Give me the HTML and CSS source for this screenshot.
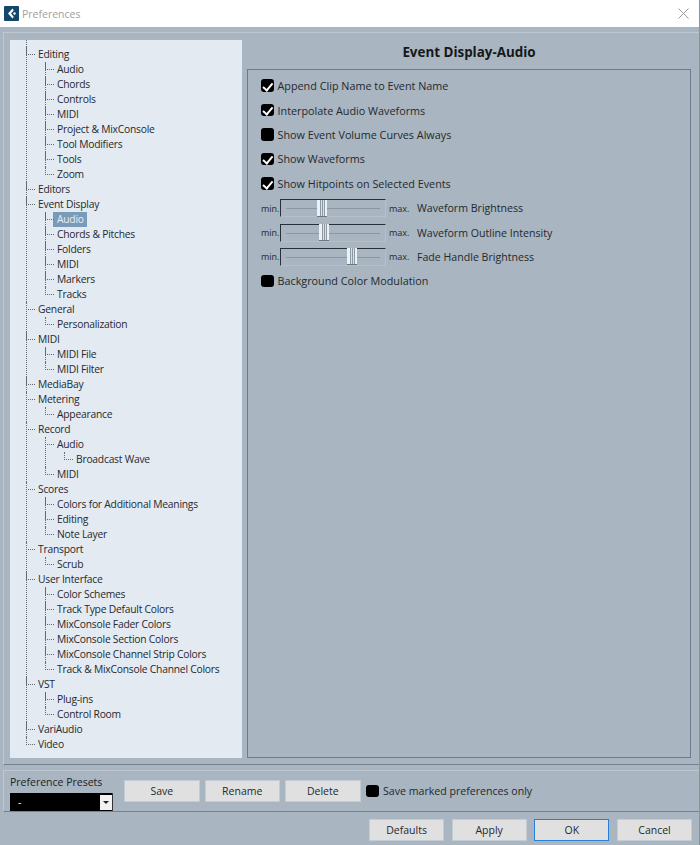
FILE: index.html
```html
<!DOCTYPE html>
<html lang="en">
<head>
<meta charset="utf-8">
<title>Preferences</title>
<link rel="stylesheet" href="styles.css">
</head>
<body>
<div class="window">
  <header class="titlebar">
    <svg class="app-icon" width="15" height="15" viewBox="0 0 15 15"><rect width="15" height="15" rx="1" fill="#12476b"/><path d="M8.5 2.5 L4 7.5 L8.5 12.5 L9.8 10.8 L7 7.5 L9.8 4.2 Z" fill="#fff"/><circle cx="10.5" cy="7.5" r="1.2" fill="#fff"/></svg>
    <span class="title">Preferences</span>
    <svg class="close" width="11" height="11" viewBox="0 0 11 11"><path d="M0.5 0.5 L10.5 10.5 M10.5 0.5 L0.5 10.5" stroke="#9a9a9a" stroke-width="1" fill="none"/></svg>
  </header>

  <section class="frame main-frame">
    <nav class="tree">
      <ul class="root">
        <li><span class="node">Editing</span>
          <ul>
            <li><span class="node">Audio</span></li>
            <li><span class="node">Chords</span></li>
            <li><span class="node">Controls</span></li>
            <li><span class="node">MIDI</span></li>
            <li><span class="node">Project &amp; MixConsole</span></li>
            <li><span class="node">Tool Modifiers</span></li>
            <li><span class="node">Tools</span></li>
            <li><span class="node">Zoom</span></li>
          </ul>
        </li>
        <li><span class="node">Editors</span></li>
        <li><span class="node">Event Display</span>
          <ul>
            <li><span class="node selected">Audio</span></li>
            <li><span class="node">Chords &amp; Pitches</span></li>
            <li><span class="node">Folders</span></li>
            <li><span class="node">MIDI</span></li>
            <li><span class="node">Markers</span></li>
            <li><span class="node">Tracks</span></li>
          </ul>
        </li>
        <li><span class="node">General</span>
          <ul><li><span class="node">Personalization</span></li></ul>
        </li>
        <li><span class="node">MIDI</span>
          <ul>
            <li><span class="node">MIDI File</span></li>
            <li><span class="node">MIDI Filter</span></li>
          </ul>
        </li>
        <li><span class="node">MediaBay</span></li>
        <li><span class="node">Metering</span>
          <ul><li><span class="node">Appearance</span></li></ul>
        </li>
        <li><span class="node">Record</span>
          <ul>
            <li><span class="node">Audio</span>
              <ul><li><span class="node">Broadcast Wave</span></li></ul>
            </li>
            <li><span class="node">MIDI</span></li>
          </ul>
        </li>
        <li><span class="node">Scores</span>
          <ul>
            <li><span class="node">Colors for Additional Meanings</span></li>
            <li><span class="node">Editing</span></li>
            <li><span class="node">Note Layer</span></li>
          </ul>
        </li>
        <li><span class="node">Transport</span>
          <ul><li><span class="node">Scrub</span></li></ul>
        </li>
        <li><span class="node">User Interface</span>
          <ul>
            <li><span class="node">Color Schemes</span></li>
            <li><span class="node">Track Type Default Colors</span></li>
            <li><span class="node">MixConsole Fader Colors</span></li>
            <li><span class="node">MixConsole Section Colors</span></li>
            <li><span class="node">MixConsole Channel Strip Colors</span></li>
            <li><span class="node">Track &amp; MixConsole Channel Colors</span></li>
          </ul>
        </li>
        <li><span class="node">VST</span>
          <ul>
            <li><span class="node">Plug-ins</span></li>
            <li><span class="node">Control Room</span></li>
          </ul>
        </li>
        <li><span class="node">VariAudio</span></li>
        <li><span class="node">Video</span></li>
      </ul>
    </nav>

    <div class="content">
      <h1 class="heading">Event Display-Audio</h1>
      <div class="box">
        <div class="row"><span class="check on"></span><span>Append Clip Name to Event Name</span></div>
        <div class="row"><span class="check on"></span><span>Interpolate Audio Waveforms</span></div>
        <div class="row"><span class="check"></span><span>Show Event Volume Curves Always</span></div>
        <div class="row"><span class="check on"></span><span>Show Waveforms</span></div>
        <div class="row"><span class="check on"></span><span>Show Hitpoints on Selected Events</span></div>
        <div class="row slider-row"><span class="min">min.</span><span class="slider"><span class="thumb" style="margin-left:36px"></span></span><span class="max">max.</span><span>Waveform Brightness</span></div>
        <div class="row slider-row"><span class="min">min.</span><span class="slider"><span class="thumb" style="margin-left:38px"></span></span><span class="max">max.</span><span>Waveform Outline Intensity</span></div>
        <div class="row slider-row"><span class="min">min.</span><span class="slider"><span class="thumb" style="margin-left:66px"></span></span><span class="max">max.</span><span>Fade Handle Brightness</span></div>
        <div class="row"><span class="check"></span><span>Background Color Modulation</span></div>
      </div>
    </div>
  </section>

  <section class="frame preset-frame">
    <div class="preset">
      <label class="preset-label">Preference Presets</label>
      <div class="select"><span>-</span><span class="arrow"></span></div>
    </div>
    <div class="preset-actions">
      <button class="btn">Save</button>
      <button class="btn">Rename</button>
      <button class="btn">Delete</button>
      <span class="check marked"></span><span class="marked-label">Save marked preferences only</span>
    </div>
  </section>

  <footer class="footer">
    <button class="btn">Defaults</button>
    <button class="btn">Apply</button>
    <button class="btn primary">OK</button>
    <button class="btn">Cancel</button>
  </footer>
</div>
</body>
</html>
```

FILE: styles.css
```css
* { box-sizing: border-box; }
html, body { margin: 0; padding: 0; }
body {
  width: 700px;
  height: 845px;
  overflow: hidden;
  font-family: "Open Sans", "Noto Sans", sans-serif;
  font-size: 10.5px;
  color: #24292d;
}
.window {
  width: 700px;
  height: 845px;
  display: flex;
  flex-direction: column;
  background: #a9b5c0;
  border-right: 1px solid #8a949d;
}
.titlebar {
  height: 27px;
  flex: none;
  background: #fff;
  display: flex;
  align-items: center;
  padding: 0 10px 0 4px;
}
.title { margin-left: 3px; color: #a0a0a0; font-size: 10.5px; }
.close { margin-left: auto; }
.app-icon { flex: none; }

.frame {
  margin-left: 3px;
  border-top: 1px solid #bdc8d2;
  border-left: 1px solid #bdc8d2;
  border-bottom: 1px solid #76828d;
}
.main-frame {
  margin-top: 5px;
  height: 733px;
  flex: none;
  display: flex;
  gap: 5px;
  padding: 7px 0 6px 6px;
}

.tree {
  width: 232px;
  flex: none;
  background: #e4eaf2;
  padding-top: 7px;
  font-size: 10.3px;
  letter-spacing: -0.23px;
}
.tree ul { list-style: none; margin: 0; padding: 0; }
.root { margin-left: 16px !important; }
.tree ul ul { margin-left: 7px; }
.tree li {
  position: relative;
  border-left: 1px dotted #5f6a74;
  padding-left: 11px;
}
.tree li:last-child { border-left-color: transparent; }
.tree li::before {
  content: "";
  position: absolute;
  left: -1px;
  top: 0;
  width: 8px;
  height: 7px;
  border-left: 1px dotted #5f6a74;
  border-bottom: 1px dotted #5f6a74;
}
.root > li:first-child::before { top: -7px; height: 14px; }
.node {
  display: block;
  height: 15px;
  line-height: 15px;
  white-space: nowrap;
}
.selected {
  width: 34px;
  margin-left: -4px;
  padding-left: 4px;
  background: #7b99b9;
  color: #e9eff6;
}

.content { flex: none; width: 444px; display: flex; flex-direction: column; font-size: 10.8px; }
.heading {
  margin: 0;
  height: 29px;
  flex: none;
  text-align: center;
  font-size: 13.4px;
  font-weight: 700;
  line-height: 25px;
  color: #14181b;
}
.box {
  flex: 1;
  border: 1px solid #6f7b86;
  padding: 3.5px 0 0 13px;
}
.row {
  height: 24.4px;
  display: flex;
  align-items: center;
}
.slider-row { padding-top: 1px; font-size: 10.6px; }
.check {
  width: 12.5px;
  height: 12.5px;
  flex: none;
  margin-right: 4px;
  background: #000;
  border-radius: 3px;
  position: relative;
}
.check.on::after {
  content: "";
  position: absolute;
  left: 4px;
  top: 1.5px;
  width: 4px;
  height: 7.5px;
  border-right: 2px solid #fff;
  border-bottom: 2px solid #fff;
  transform: rotate(40deg);
}
.min { width: 19px; font-size: 9px; flex: none; }
.max { width: 31px; padding-left: 3px; font-size: 9px; flex: none; }
.slider {
  width: 106px;
  height: 18px;
  flex: none;
  border-top: 1px solid #27313a;
  border-left: 1px solid #27313a;
  border-right: 1px solid #b5c0ca;
  border-bottom: 1px solid #b5c0ca;
  display: flex;
  align-items: center;
  background: linear-gradient(#8a96a1, #8a96a1) 5px 8px / 94px 1px no-repeat;
}
.thumb {
  width: 10px;
  height: 17px;
  flex: none;
  background: linear-gradient(90deg, #eef1f3 0 3px, #8f99a3 3px 4px, #d9dfe3 4px 5px, #8f99a3 5px 6px, #d9dfe3 6px 7px, #8f99a3 7px 8px, #eef1f3 8px);
  border-bottom: 1px solid #6b7680;
}

.preset-frame {
  margin-top: 5px;
  height: 42px;
  flex: none;
  display: flex;
  border-top-color: #bdc8d2;
  padding-left: 6px;
}
.preset { width: 103px; flex: none; display: flex; flex-direction: column; padding-top: 3px; }
.preset-label { height: 19px; line-height: 16px; color: #1d2226; }
.select {
  height: 18px;
  background: #000;
  color: #fff;
  display: flex;
  align-items: center;
  justify-content: space-between;
  padding-left: 8px;
  border-right: 1px solid #333;
}
.arrow {
  width: 12px;
  height: 15px;
  background: #f2f2f2;
  position: relative;
}
.arrow::after {
  content: "";
  position: absolute;
  left: 3px;
  top: 6px;
  border-left: 3px solid transparent;
  border-right: 3px solid transparent;
  border-top: 3px solid #222;
}
.preset-actions {
  display: flex;
  align-items: center;
  margin-left: 11px;
  height: 22px;
  margin-top: 9px;
}
.btn {
  width: 75.5px;
  height: 22px;
  padding: 0;
  margin: 0;
  font: inherit;
  color: #24292d;
  background: #e0e0e0;
  border: 1px solid #c3ccd4;
  flex: none;
}
.preset-actions .btn + .btn { margin-left: 5px; }
.check.marked { margin-left: 5.5px; margin-right: 4.5px; }
.marked-label { font-size: 10.6px; }

.footer {
  flex: 1;
  display: flex;
  gap: 7.67px;
  justify-content: flex-end;
  padding: 7px 7px 0 0;
}
.footer .btn { width: 75px; }
.primary { border: 1px solid #2a80d8; }
```
